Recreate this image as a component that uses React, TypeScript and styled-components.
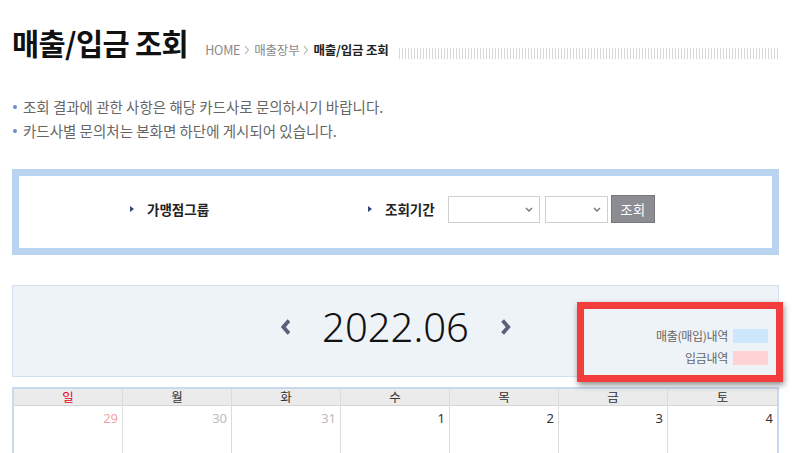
import React from "react";
import styled, { createGlobalStyle } from "styled-components";

const Global = createGlobalStyle`
  html, body { margin: 0; padding: 0; background: #fff; }
  body { font-family: "Noto Sans CJK KR", "Noto Sans", sans-serif; color: #333; }
`;

const Page = styled.div`
  width: 767px;
  margin-left: 12px;
  padding-top: 24px;
`;

const Header = styled.div`
  display: flex;
  align-items: flex-end;
  height: 36px;
`;

const Title = styled.h1`
  margin: 0;
  font-size: 29.5px;
  line-height: 36px;
  font-weight: 700;
  letter-spacing: -0.6px;
  color: #111;
  white-space: nowrap;
`;

const Crumbs = styled.div`
  display: flex;
  align-items: center;
  margin-left: 17px;
  margin-bottom: 1px;
  font-size: 12.5px;
  line-height: 18px;
  color: #888;
  letter-spacing: -0.2px;
  white-space: nowrap;
  gap: 4px;
`;

const Crumb = styled.span<{ $current?: boolean }>`
  color: ${(p) => (p.$current ? "#222" : "#8a8a8a")};
  font-weight: ${(p) => (p.$current ? 700 : 400)};
`;

const Hatch = styled.div`
  flex: 1;
  height: 11px;
  margin-left: 10px;
  margin-bottom: 1px;
  background: repeating-linear-gradient(90deg, #d8d8d8 0 1px, transparent 1px 3px);
`;

const Notices = styled.ul`
  list-style: none;
  margin: 35px 0 0;
  padding: 0;
`;

const Notice = styled.li`
  font-size: 14.5px;
  line-height: 24px;
  color: #666;
  display: flex;
  align-items: center;
  letter-spacing: 0;
  &::before {
    content: "";
    width: 4px;
    height: 4px;
    border-radius: 50%;
    background: #6d8fc2;
    margin-right: 6px;
    margin-left: 1px;
  }
`;

const SearchBox = styled.div`
  margin-top: 26px;
  border: 7px solid #b9d3f0;
  display: flex;
  align-items: center;
  padding-left: 111px;
  padding-bottom: 6px;
  box-sizing: content-box;
  height: 66px;
`;

const Field = styled.div<{ $w?: number }>`
  display: flex;
  align-items: center;
  width: ${(p) => (p.$w ? `${p.$w}px` : "auto")};
`;

const Bullet = styled.span`
  width: 0;
  height: 0;
  border-top: 3px solid transparent;
  border-bottom: 3px solid transparent;
  border-left: 4px solid #2d4a7a;
  margin-right: 13px;
`;

const Label = styled.span`
  font-size: 13.5px;
  font-weight: 700;
  color: #222;
  margin-right: 13px;
`;

const Select = styled.div<{ $w: number }>`
  width: ${(p) => p.$w}px;
  height: 27px;
  box-sizing: border-box;
  border: 1px solid #cfcfcf;
  background: #fff;
  display: flex;
  align-items: center;
  justify-content: flex-end;
  padding-right: 6px;
  margin-right: 5px;
`;

const Button = styled.button`
  width: 44px;
  height: 28px;
  box-sizing: border-box;
  border: 1px solid #76767c;
  background: #8c8c93;
  color: #fff;
  font-family: inherit;
  font-size: 13.5px;
  padding: 0;
  margin-left: -2px;
  cursor: pointer;
`;

const MonthPanel = styled.div`
  position: relative;
  margin-top: 30px;
  height: 90px;
  border: 1px solid #d3e0f0;
  background: #eef3f8;
  display: grid;
  grid-template-columns: 1fr auto 1fr;
`;

const MonthNav = styled.div`
  grid-column: 2;
  display: flex;
  align-items: center;
  gap: 32px;
  padding-bottom: 8px;
`;

const Year = styled.span`
  font-family: "Noto Sans", sans-serif;
  font-weight: 300;
  font-size: 40px;
  color: #111;
  line-height: 1;
`;

const Legend = styled.div`
  grid-column: 3;
  align-self: end;
  justify-self: end;
  display: grid;
  grid-template-columns: auto 35px;
  column-gap: 5px;
  row-gap: 5px;
  align-items: center;
  padding: 0 10px 10px 0;
  font-size: 12px;
  color: #666;
  text-align: right;
  letter-spacing: -0.3px;
`;

const Swatch = styled.span<{ $c: string }>`
  display: block;
  height: 14px;
  background: ${(p) => p.$c};
`;

const Annotation = styled.div`
  position: absolute;
  left: 564px;
  top: 16px;
  width: 206px;
  height: 80px;
  box-sizing: border-box;
  border: 7px solid #f33d3d;
  box-shadow: 1px 3px 6px rgba(0, 0, 0, 0.45);
  pointer-events: none;
`;

const Calendar = styled.div`
  margin-top: 10px;
  border: 2px solid #c9d9ef;
  border-bottom: none;
  display: grid;
  grid-template-columns: repeat(7, 1fr);
`;

const DayHead = styled.div<{ $sun?: boolean; $last?: boolean }>`
  height: 16px;
  line-height: 16px;
  background: #ebebeb;
  border-bottom: 1px solid #d6d6d6;
  border-right: ${(p) => (p.$last ? "none" : "1px solid #dcdcdc")};
  text-align: center;
  font-size: 12.5px;
  color: ${(p) => (p.$sun ? "#e8001c" : "#333")};
`;

const Cell = styled.div<{ $tone: "sun" | "prev" | "cur"; $last?: boolean }>`
  height: 80px;
  border-right: ${(p) => (p.$last ? "none" : "1px solid #dcdcdc")};
  text-align: right;
  padding: 4px 4px 0 0;
  font-family: "Noto Sans", sans-serif;
  font-size: 13px;
  line-height: 16px;
  color: ${(p) => (p.$tone === "sun" ? "#f4a3a3" : p.$tone === "prev" ? "#bbb" : "#333")};
`;

const Chevron = ({ dir, size = 16, color = "#5a5f7a", w = 2.4 }: { dir: "l" | "r"; size?: number; color?: string; w?: number }) => (
  <svg width={size * 0.6} height={size} viewBox="0 0 6 10" fill="none">
    <path
      d={dir === "l" ? "M5 1 L1.5 5 L5 9" : "M1 1 L4.5 5 L1 9"}
      stroke={color}
      strokeWidth={w}
      strokeLinecap="butt"
      strokeLinejoin="miter"
    />
  </svg>
);

const SelectArrow = () => (
  <svg width="8" height="5" viewBox="0 0 8 5" fill="none">
    <path d="M1 1 L4 4 L7 1" stroke="#777" strokeWidth="1.4" />
  </svg>
);

const days = ["일", "월", "화", "수", "목", "금", "토"];
const firstWeek: { n: number; tone: "sun" | "prev" | "cur" }[] = [
  { n: 29, tone: "sun" },
  { n: 30, tone: "prev" },
  { n: 31, tone: "prev" },
  { n: 1, tone: "cur" },
  { n: 2, tone: "cur" },
  { n: 3, tone: "cur" },
  { n: 4, tone: "cur" },
];

export default function App() {
  return (
    <>
      <Global />
      <Page>
        <Header>
          <Title>매출/입금 조회</Title>
          <Crumbs>
            <Crumb>HOME</Crumb>
            <Chevron dir="r" size={10} color="#999" w={1} />
            <Crumb>매출장부</Crumb>
            <Chevron dir="r" size={10} color="#999" w={1} />
            <Crumb $current>매출/입금 조회</Crumb>
          </Crumbs>
          <Hatch />
        </Header>

        <Notices>
          <Notice>조회 결과에 관한 사항은 해당 카드사로 문의하시기 바랍니다.</Notice>
          <Notice>카드사별 문의처는 본화면 하단에 게시되어 있습니다.</Notice>
        </Notices>

        <SearchBox>
          <Field $w={238}>
            <Bullet />
            <Label>가맹점그룹</Label>
          </Field>
          <Field>
            <Bullet />
            <Label>조회기간</Label>
            <Select $w={92}>
              <SelectArrow />
            </Select>
            <Select $w={63}>
              <SelectArrow />
            </Select>
            <Button>조회</Button>
          </Field>
        </SearchBox>

        <MonthPanel>
          <MonthNav>
            <Chevron dir="l" />
            <Year>2022.06</Year>
            <Chevron dir="r" />
          </MonthNav>
          <Legend>
            <span>매출(매입)내역</span>
            <Swatch $c="#cce6fc" />
            <span>입금내역</span>
            <Swatch $c="#ffd3d6" />
          </Legend>
          <Annotation />
        </MonthPanel>

        <Calendar>
          {days.map((d, i) => (
            <DayHead key={d} $sun={i === 0} $last={i === 6}>
              {d}
            </DayHead>
          ))}
          {firstWeek.map((c, i) => (
            <Cell key={i} $tone={c.tone} $last={i === 6}>
              {c.n}
            </Cell>
          ))}
        </Calendar>
      </Page>
    </>
  );
}
